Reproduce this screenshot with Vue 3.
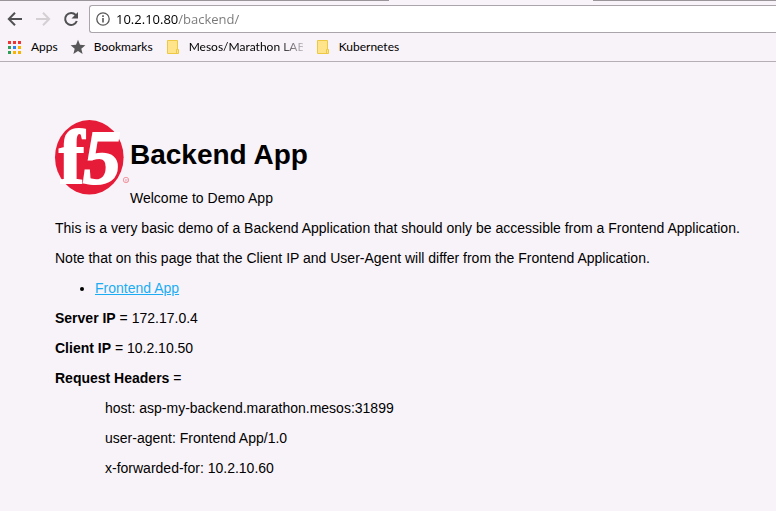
<script setup>
import { ref } from 'vue'

const host = '10.2.10.80'
const path = '/backend/'
const address = ref(host + path)
const folders = ['Mesos/Marathon LAB', 'Kubernetes']
const dots = ['#f03434', '#f03434', '#f03434', '#2f9e58', '#2a84f0', '#f8b400', '#2f9e58', '#f8b400', '#f8b400']
const facts = [
  { label: 'Server IP', value: '172.17.0.4' },
  { label: 'Client IP', value: '10.2.10.50' },
  { label: 'Request Headers', value: '' }
]
const headers = [
  'host: asp-my-backend.marathon.mesos:31899',
  'user-agent: Frontend App/1.0',
  'x-forwarded-for: 10.2.10.60'
]
</script>

<template>
  <div class="browser">
    <header class="chrome">
      <div class="tab-edge"><span class="tab-gap"></span></div>
      <div class="toolbar">
        <nav class="nav">
          <button type="button" aria-label="Back">
            <svg width="16" height="16" viewBox="0 0 16 16"><path d="M15 8H2M8 1.700 1.800 8 8 14.300" fill="none" stroke="#505052" stroke-width="2" /></svg>
          </button>
          <button type="button" aria-label="Forward" disabled>
            <svg width="16" height="16" viewBox="0 0 16 16"><path d="M1 8h13M8 1.700 14.200 8 8 14.300" fill="none" stroke="#d3cfd3" stroke-width="2" /></svg>
          </button>
          <button type="button" aria-label="Reload">
            <svg width="16" height="16" viewBox="0 0 16 16">
              <path d="M12.700 4A6 6 0 1 0 13.800 10" fill="none" stroke="#505052" stroke-width="2" />
              <path d="M15 1v6.500H8.500z" fill="#505052" />
            </svg>
          </button>
        </nav>
        <div class="omnibox">
          <svg class="info" width="14" height="14" viewBox="0 0 14 14">
            <circle cx="7" cy="7" r="6.200" fill="none" stroke="#58585a" stroke-width="1.300" />
            <path d="M6.200 6h1.600v4.500H6.200zM6.200 3.300h1.600v1.600H6.200z" fill="#58585a" />
          </svg>
          <input v-model="address" class="address" type="text" aria-label="Address" spellcheck="false" />
        </div>
      </div>
      <nav class="bookmarks">
        <a href="#" class="bookmark apps">
          <svg width="13" height="13" viewBox="0 0 13 13">
            <rect v-for="(c, i) in dots" :key="i" :x="(i % 3) * 5" :y="Math.floor(i / 3) * 5" width="3" height="3" :fill="c" />
          </svg>
          <span>Apps</span>
        </a>
        <a href="#" class="bookmark starred">
          <svg width="16" height="16" viewBox="0 0 16 16"><path d="m8 .8 2 5 5.400.4-4.100 3.500 1.300 5.300L8 12.100 3.400 15l1.300-5.300L.6 6.200 6 5.800z" fill="#58585a" /></svg>
          <span>Bookmarks</span>
        </a>
        <a v-for="name in folders" :key="name" href="#" class="bookmark folder">
          <svg width="12" height="14" viewBox="0 0 12 14">
            <path d="M.5.5h10v9h1v4H.5z" fill="#ffe48c" stroke="#edc843" />
            <path d="M9.500 13V9.500h1" fill="none" stroke="#edc843" />
          </svg>
          <span class="folder-name">{{ name }}</span>
        </a>
      </nav>
    </header>

    <main class="page">
      <svg class="logo" width="75" height="75" viewBox="0 0 75 75" role="img" aria-label="f5">
        <ellipse cx="34.300" cy="37.300" rx="34.300" ry="37.200" fill="#e61b37" />
        <g class="logo-mark">
          <text x="4" y="63">f</text>
          <text x="28" y="63" class="five">5</text>
        </g>
        <circle cx="71" cy="60" r="2.700" fill="none" stroke="#ef8190" stroke-width=".8" />
        <text x="70" y="62" class="registered">R</text>
      </svg>
      <h1>Backend App</h1>
      <p>Welcome to Demo App</p>
      <p>This is a very basic demo of a Backend Application that should only be accessible from a Frontend Application.</p>
      <p>Note that on this page that the Client IP and User-Agent will differ from the Frontend Application.</p>
      <ul>
        <li><a href="#">Frontend App</a></li>
      </ul>
      <p v-for="fact in facts" :key="fact.label"><b>{{ fact.label }}</b> = {{ fact.value }}</p>
      <div class="headers">
        <p v-for="line in headers" :key="line">{{ line }}</p>
      </div>
    </main>
  </div>
</template>

<style>
body {
  background: #f8f3f8;
}
</style>

<style scoped>
.browser {
  font: 14px/16px "Liberation Sans", Arial, sans-serif;
  color: #000;
}
.chrome {
  border-bottom: 1px solid #b5afb5;
  font: 12px/16px Lato, sans-serif;
}
.tab-edge {
  display: flex;
  height: 1px;
  background: #999599;
}
.tab-gap {
  width: 204px;
  margin-left: 389px;
  background: #f8f3f8;
}
.toolbar {
  display: flex;
  align-items: center;
  padding-top: 4px;
}
.nav {
  display: flex;
  gap: 12px;
  padding: 0 10px 0 7px;
}
button {
  display: block;
  width: 16px;
  height: 16px;
  padding: 0;
  border: 0;
  background: none;
}
svg {
  display: block;
  flex: none;
}
.omnibox {
  box-sizing: border-box;
  display: flex;
  flex: 1;
  align-items: center;
  gap: 6px;
  height: 28px;
  padding-left: 6px;
  border: 1px solid #aaa5aa;
  border-right: 0;
  border-radius: 3px 0 0 3px;
  background: #fff;
}
.address {
  flex: 1;
  min-width: 0;
  padding: 0;
  border: 0;
  outline: 0;
  background: linear-gradient(90deg, #000 62px, #777 62px);
  background-clip: text;
  color: transparent;
  font: 13px/20px "Open Sans", sans-serif;
}
.bookmarks {
  display: flex;
  align-items: center;
  height: 28px;
  padding-left: 8px;
}
.bookmark {
  display: flex;
  align-items: center;
  color: #000;
  text-decoration: none;
  white-space: nowrap;
}
.apps {
  gap: 10px;
  margin-right: 12px;
}
.starred {
  gap: 8px;
  margin-right: 14px;
}
.folder {
  gap: 10px;
  margin-right: 14px;
}
.folder-name {
  max-width: 114px;
  overflow: hidden;
}
.folder:nth-child(3) .folder-name {
  mask-image: linear-gradient(90deg, #000 88px, transparent 120px);
}
.page {
  padding: 58px 30px 0 55px;
}
.logo {
  float: left;
  overflow: visible;
}
.logo-mark {
  fill: #fff;
  stroke: #fff;
  stroke-width: 2px;
  font: bold 76px "Liberation Serif", serif;
}
.five {
  font-style: italic;
}
.registered {
  fill: #ef8190;
  font: 4px "Liberation Sans", sans-serif;
}
h1 {
  margin: 0 0 19px;
  padding-top: 19px;
  font-size: 28px;
  line-height: 32px;
}
p,
ul {
  margin: 0 0 14px;
}
ul {
  padding-left: 40px;
}
li a {
  color: #1badf3;
}
.headers {
  padding-left: 50px;
}
</style>
